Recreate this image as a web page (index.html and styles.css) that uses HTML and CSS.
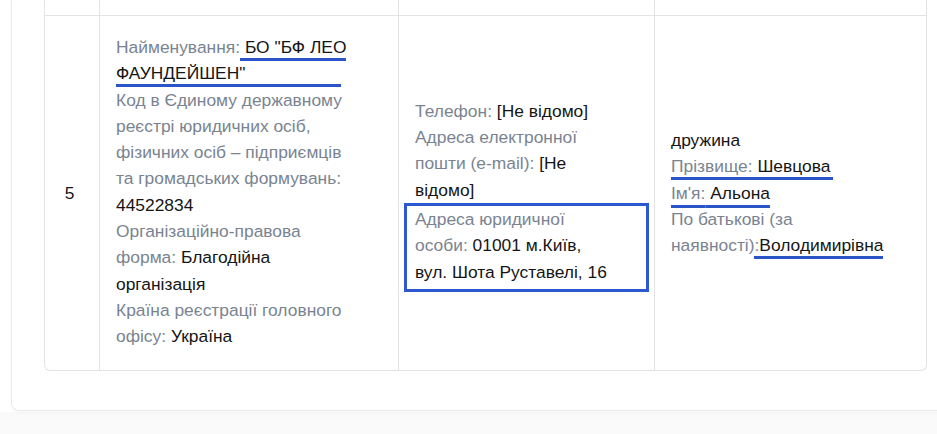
FILE: index.html
```html
<!DOCTYPE html>
<html lang="uk">
<head>
<meta charset="utf-8">
<link rel="stylesheet" href="styles.css">
</head>
<body>
<div class="page">
  <div class="card">
    <table class="grid">
      <tr class="prev">
        <td class="c1"></td><td class="c2"></td><td class="c3"></td><td class="c4"></td>
      </tr>
      <tr class="row">
        <td class="c1 num">5</td>
        <td class="c2">
          <div><span class="lbl">Найменування:</span><span class="mark-box"> БО "БФ ЛЕО ФАУНДЕЙШЕН"</span></div>
          <div><span class="lbl">Код в Єдиному державному реєстрі юридичних осіб, фізичних осіб – підприємців та громадських формувань:</span> 44522834</div>
          <div><span class="lbl">Організаційно-правова форма:</span> Благодійна організація</div>
          <div><span class="lbl">Країна реєстрації головного офісу:</span> Україна</div>
        </td>
        <td class="c3">
          <div><span class="lbl">Телефон:</span> [Не відомо]</div>
          <div><span class="lbl">Адреса електронної пошти (e-mail):</span> [Не відомо]</div>
          <div class="boxed"><span class="lbl">Адреса юридичної особи:</span> 01001 м.Київ, вул. Шота Руставелі, 16</div>
        </td>
        <td class="c4">
          <div>дружина</div>
          <div><span class="mark mark-wide"><span class="lbl">Прізвище:</span> Шевцова</span></div>
          <div><span class="mark"><span class="lbl">Ім'я:</span> Альона</span></div>
          <div><span class="lbl">По батькові (за наявності):</span><span class="mark-pre">Володимирівна</span></div>
        </td>
      </tr>
    </table>
  </div>
</div>
</body>
</html>
```

FILE: styles.css
```css
html, body {
  margin: 0;
  padding: 0;
  overflow: hidden;
  background: #ffffff;
}
body {
  width: 937px;
  height: 434px;
  font-family: "Liberation Sans", Arial, sans-serif;
  font-size: 17.4px;
  color: #151515;
}
.page {
  height: 434px;
  background: linear-gradient(#ffffff 0, #ffffff 412px, #fafafa 412px);
  padding-left: 11px;
}
.card {
  width: 960px;
  border: 1px solid #ebebeb;
  border-top: none;
  border-radius: 0 0 8px 8px;
  padding: 0 0 39px 32px;
  background: #fff;
  box-shadow: 0 2px 3px rgba(0,0,0,0.03);
}
.grid {
  border-collapse: separate;
  border-spacing: 0;
  width: 883px;
  table-layout: fixed;
  border: 1px solid #e3e3e3;
  border-top: none;
  border-radius: 0 0 6px 6px;
}
.grid td {
  border-left: 1px solid #e3e3e3;
  padding: 0;
  line-height: 26.3px;
  vertical-align: middle;
}
.grid td.c1 { border-left: none; width: 54px; }
.grid td.c2 { width: 298px; }
.grid td.c3 { width: 255px; }
.prev td {
  height: 15px;
  border-bottom: 1px solid #e3e3e3;
}
.row td.num {
  text-align: center;
  padding-right: 5px;
}
.row td.c2 {
  padding: 18px 44px 20px 16px;
  vertical-align: top;
}
.row td.c3 {
  padding: 4px 39px 0 16px;
}
.row td.c4 {
  padding: 0 16px 0 16px;
}
.lbl {
  color: #7a8491;
}
.mark {
  text-decoration: underline;
  text-decoration-color: #2a54c8;
  text-decoration-thickness: 3px;
  text-underline-offset: 6px;
  text-decoration-skip-ink: none;
}
.mark-wide {
  padding-right: 3px;
  text-decoration: none;
  border-bottom: 3px solid #2a54c8;
  padding-bottom: 1px;
}
.mark-box {
  border-bottom: 3px solid #2a54c8;
  padding-right: 96px;
  padding-bottom: 1px;
}
.mark-pre {
  border-bottom: 3px solid #2a54c8;
  margin-left: -5px;
  padding-left: 5px;
  padding-bottom: 1px;
}
.boxed {
  border: 3px solid #2c58d2;
  margin: 0 -34px 0 -11px;
  padding: 0 31px 4px 8px;
}
```
